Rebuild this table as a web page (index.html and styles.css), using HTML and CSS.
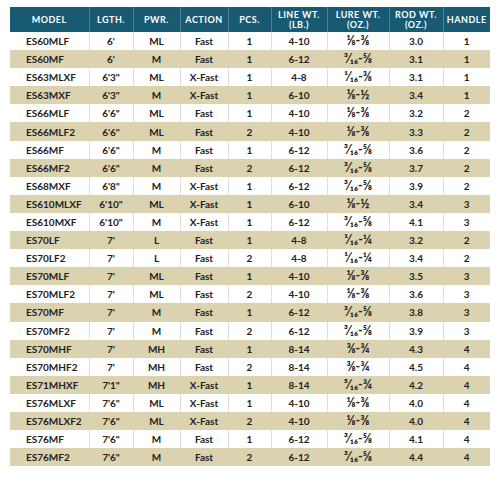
FILE: index.html
```html
<!DOCTYPE html>
<html lang="en">
<head>
    <meta charset="UTF-8">
    <title>Rod Specs</title>
    <link rel="stylesheet" href="styles.css">
</head>
<body>

    <table class="specs">
        <colgroup>
            <col style="width:79px">
            <col style="width:44px">
            <col style="width:47px">
            <col style="width:48px">
            <col style="width:43px">
            <col style="width:56px">
            <col style="width:62px">
            <col style="width:54px">
            <col style="width:47px">
        </colgroup>
        <thead>
            <tr>
                <th>MODEL</th>
                <th>LGTH.</th>
                <th>PWR.</th>
                <th>ACTION</th>
                <th>PCS.</th>
                <th>LINE WT.<br>(LB.)</th>
                <th>LURE WT.<br>(OZ.)</th>
                <th>ROD WT.<br>(OZ.)</th>
                <th>HANDLE</th>
            </tr>
        </thead>
        <tbody>
            <tr><td>ES60MLF</td><td>6'</td><td>ML</td><td>Fast</td><td>1</td><td>4-10</td><td>⅛-⅜</td><td>3.0</td><td>1</td></tr>
            <tr><td>ES60MF</td><td>6'</td><td>M</td><td>Fast</td><td>1</td><td>6-12</td><td>³⁄₁₆-⅝</td><td>3.1</td><td>1</td></tr>
            <tr><td>ES63MLXF</td><td>6'3"</td><td>ML</td><td>X-Fast</td><td>1</td><td>4-8</td><td>¹⁄₁₆-⅜</td><td>3.1</td><td>1</td></tr>
            <tr><td>ES63MXF</td><td>6'3"</td><td>M</td><td>X-Fast</td><td>1</td><td>6-10</td><td>⅛-½</td><td>3.4</td><td>1</td></tr>
            <tr><td>ES66MLF</td><td>6'6"</td><td>ML</td><td>Fast</td><td>1</td><td>4-10</td><td>⅛-⅜</td><td>3.2</td><td>2</td></tr>
            <tr><td>ES66MLF2</td><td>6'6"</td><td>ML</td><td>Fast</td><td>2</td><td>4-10</td><td>⅛-⅜</td><td>3.3</td><td>2</td></tr>
            <tr><td>ES66MF</td><td>6'6"</td><td>M</td><td>Fast</td><td>1</td><td>6-12</td><td>³⁄₁₆-⅝</td><td>3.6</td><td>2</td></tr>
            <tr><td>ES66MF2</td><td>6'6"</td><td>M</td><td>Fast</td><td>2</td><td>6-12</td><td>³⁄₁₆-⅝</td><td>3.7</td><td>2</td></tr>
            <tr><td>ES68MXF</td><td>6'8"</td><td>M</td><td>X-Fast</td><td>1</td><td>6-12</td><td>³⁄₁₆-⅝</td><td>3.9</td><td>2</td></tr>
            <tr><td>ES610MLXF</td><td>6'10"</td><td>ML</td><td>X-Fast</td><td>1</td><td>6-10</td><td>⅛-½</td><td>3.4</td><td>3</td></tr>
            <tr><td>ES610MXF</td><td>6'10"</td><td>M</td><td>X-Fast</td><td>1</td><td>6-12</td><td>³⁄₁₆-⅝</td><td>4.1</td><td>3</td></tr>
            <tr><td>ES70LF</td><td>7'</td><td>L</td><td>Fast</td><td>1</td><td>4-8</td><td>¹⁄₁₆-¼</td><td>3.2</td><td>2</td></tr>
            <tr><td>ES70LF2</td><td>7'</td><td>L</td><td>Fast</td><td>2</td><td>4-8</td><td>¹⁄₁₆-¼</td><td>3.4</td><td>2</td></tr>
            <tr><td>ES70MLF</td><td>7'</td><td>ML</td><td>Fast</td><td>1</td><td>4-10</td><td>⅛-⅜</td><td>3.5</td><td>3</td></tr>
            <tr><td>ES70MLF2</td><td>7'</td><td>ML</td><td>Fast</td><td>2</td><td>4-10</td><td>⅛-⅜</td><td>3.6</td><td>3</td></tr>
            <tr><td>ES70MF</td><td>7'</td><td>M</td><td>Fast</td><td>1</td><td>6-12</td><td>³⁄₁₆-⅝</td><td>3.8</td><td>3</td></tr>
            <tr><td>ES70MF2</td><td>7'</td><td>M</td><td>Fast</td><td>2</td><td>6-12</td><td>³⁄₁₆-⅝</td><td>3.9</td><td>3</td></tr>
            <tr><td>ES70MHF</td><td>7'</td><td>MH</td><td>Fast</td><td>1</td><td>8-14</td><td>⅜-¾</td><td>4.3</td><td>4</td></tr>
            <tr><td>ES70MHF2</td><td>7'</td><td>MH</td><td>Fast</td><td>2</td><td>8-14</td><td>⅜-¾</td><td>4.5</td><td>4</td></tr>
            <tr><td>ES71MHXF</td><td>7'1"</td><td>MH</td><td>X-Fast</td><td>1</td><td>8-14</td><td>⁵⁄₁₆-¾</td><td>4.2</td><td>4</td></tr>
            <tr><td>ES76MLXF</td><td>7'6"</td><td>ML</td><td>X-Fast</td><td>1</td><td>4-10</td><td>⅛-⅜</td><td>4.0</td><td>4</td></tr>
            <tr><td>ES76MLXF2</td><td>7'6"</td><td>ML</td><td>X-Fast</td><td>2</td><td>4-10</td><td>⅛-⅜</td><td>4.0</td><td>4</td></tr>
            <tr><td>ES76MF</td><td>7'6"</td><td>M</td><td>Fast</td><td>1</td><td>6-12</td><td>³⁄₁₆-⅝</td><td>4.1</td><td>4</td></tr>
            <tr><td>ES76MF2</td><td>7'6"</td><td>M</td><td>Fast</td><td>2</td><td>6-12</td><td>³⁄₁₆-⅝</td><td>4.4</td><td>4</td></tr>
        </tbody>
    </table>

</body>
</html>
```

FILE: styles.css
```css
body {
    margin: 0;
    padding: 7px 10px 0;
    background-color: #fff;
    font-family: Lato, "DejaVu Sans", sans-serif;
}
.specs {
    width: 480px;
    border-collapse: collapse;
    table-layout: fixed;
}
.specs th {
    height: 25px;
    padding: 0;
    background-color: #175a72;
    color: #fff;
    font-size: 9px;
    font-weight: 700;
    letter-spacing: 0.5px;
    line-height: 10px;
    text-align: center;
    border-left: 1px solid #4f8193;
}
.specs th:first-child {
    border-left: none;
}
.specs td {
    height: 18.1px;
    padding: 0;
    color: #222;
    font-size: 10px;
    font-weight: 700;
    text-align: center;
    border-left: 1px solid #dedede;
}
.specs td:first-child {
    text-align: left;
    padding-left: 16px;
    border-left: none;
}
/* lure weights: fraction glyphs run small, so size them up */
.specs td:nth-child(7) {
    font-size: 12.5px;
    line-height: 12px;
}
.specs tbody tr:nth-child(even) td {
    background-color: #dbd3af;
    border-left-color: #dbd3af;
}
```
